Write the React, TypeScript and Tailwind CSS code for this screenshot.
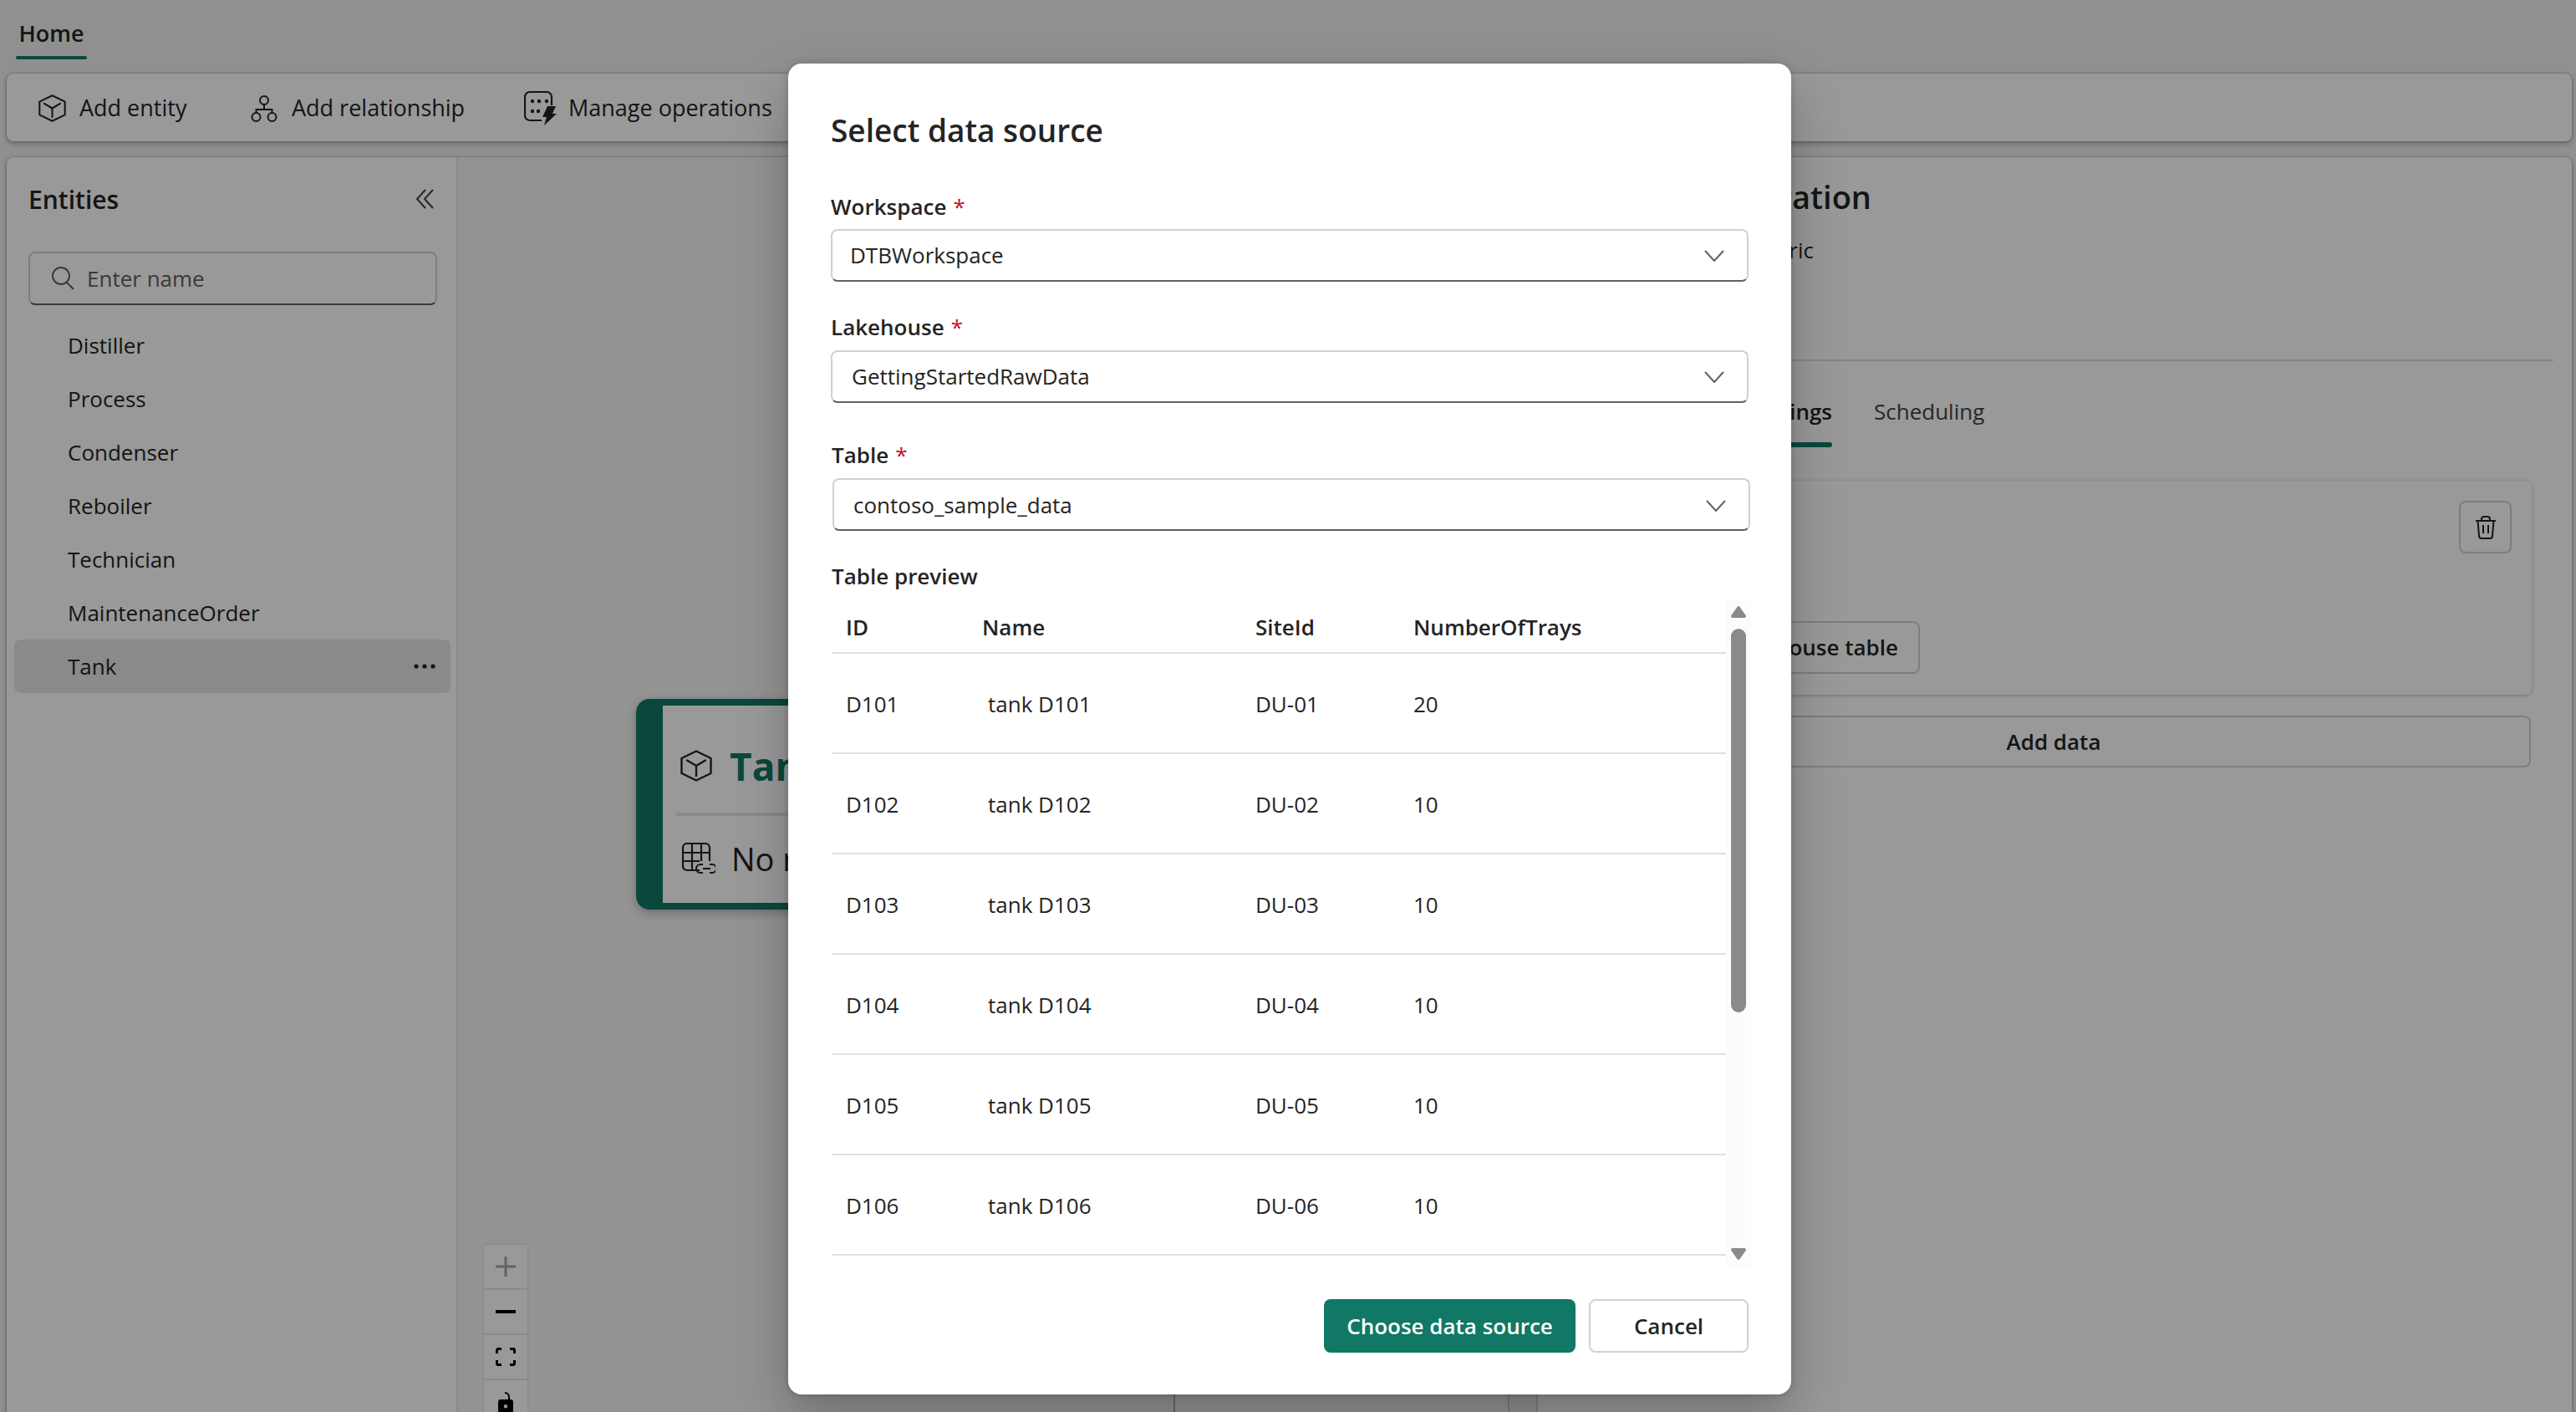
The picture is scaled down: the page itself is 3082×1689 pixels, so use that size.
import React from 'react';

const entities = ['Distiller', 'Process', 'Condenser', 'Reboiler', 'Technician', 'MaintenanceOrder'];

const rows = [
  { id: 'D101', name: 'tank D101', site: 'DU-01', trays: '20' },
  { id: 'D102', name: 'tank D102', site: 'DU-02', trays: '10' },
  { id: 'D103', name: 'tank D103', site: 'DU-03', trays: '10' },
  { id: 'D104', name: 'tank D104', site: 'DU-04', trays: '10' },
  { id: 'D105', name: 'tank D105', site: 'DU-05', trays: '10' },
  { id: 'D106', name: 'tank D106', site: 'DU-06', trays: '10' },
];

const CubeIcon = ({ className }: { className: string }) => (
  <svg viewBox="0 0 38 38" fill="none" stroke="currentColor" strokeWidth="2.4" strokeLinejoin="round" strokeLinecap="round" className={className}>
    <path d="M19 1.5 36.5 10v18L19 36.5 1.5 28V10z" />
    <path d="M8 12.5 19 19l11-6.5M19 19v12" />
  </svg>
);

const RelationshipIcon = () => (
  <svg viewBox="0 0 32 32" fill="none" stroke="currentColor" strokeWidth="2" className="h-[32px] w-[32px] shrink-0">
    <circle cx="16" cy="6" r="5" />
    <circle cx="6.5" cy="26" r="5" />
    <circle cx="25.5" cy="26" r="5" />
    <path d="M16 11v6M6.5 21v-4h19v4" />
  </svg>
);

const OperationsIcon = () => (
  <svg viewBox="0 0 40 42" fill="none" className="h-[42px] w-[40px] shrink-0">
    <path d="M21 35H7a6 6 0 0 1-6-6V7a6 6 0 0 1 6-6h20a6 6 0 0 1 6 6v10" stroke="currentColor" strokeWidth="2.2" />
    <g fill="currentColor">
      <circle cx="10" cy="12" r="2.2" />
      <circle cx="18" cy="12" r="2.2" />
      <circle cx="27" cy="12" r="2.2" />
      <circle cx="10" cy="24" r="2.2" />
      <circle cx="17" cy="24" r="2.2" />
      <path d="M28 18h10l-4 9h5L24 41l3-10h-5z" />
    </g>
  </svg>
);

const Chevron = () => (
  <svg viewBox="0 0 24 14" fill="none" stroke="#616161" strokeWidth="2" className="h-[14px] w-[24px]">
    <path d="M1 1l11 12L23 1" />
  </svg>
);

const Field = ({ label, value, labelClass, boxClass }: { label: string; value: string; labelClass: string; boxClass: string }) => (
  <>
    <div className={`flex h-[40px] items-center text-[26px] font-semibold ${labelClass}`}>
      {label}
      <span className="ml-[8px] font-normal text-[#c50f1f]">*</span>
    </div>
    <div className={`mt-[7px] flex h-[63px] w-[1098px] items-center justify-between rounded-[8px] border-2 border-[#d1d1d1] border-b-[#616161] pr-[27px] text-[26px] text-[#242424] ${boxClass}`}>
      <span>{value}</span>
      <Chevron />
    </div>
  </>
);

export default function App() {
  return (
    <div className="relative h-[1689px] w-[3082px] overflow-hidden bg-[#f0f0f0] font-['Open_Sans',sans-serif] text-[#242424]">
      {/* tabs */}
      <div className="h-[88px] pl-[19px] pt-[19px]">
        <div className="inline-block w-[85px] text-center text-[27px] font-semibold leading-[42px]">Home</div>
        <div className="mt-[6px] h-[4px] w-[85px] rounded-full bg-[#117865]" />
      </div>

      {/* toolbar */}
      <div className="mx-[8px] flex h-[81px] w-[3069px] items-center rounded-[8px] bg-white pl-[38px] pt-[2px] text-[27px] shadow-[0_0_3px_rgba(0,0,0,0.3),0_3px_6px_rgba(0,0,0,0.25)]">
        <CubeIcon className="h-[33px] w-[33px] shrink-0" />
        <span className="ml-[16px] w-[133px] whitespace-nowrap">Add entity</span>
        <span className="ml-[72px]"><RelationshipIcon /></span>
        <span className="ml-[17px] w-[209px] whitespace-nowrap">Add relationship</span>
        <span className="ml-[69px]"><OperationsIcon /></span>
        <span className="ml-[13px] whitespace-nowrap">Manage operations</span>
      </div>

      {/* main area */}
      <div className="mx-[8px] mt-[19px] flex h-[1520px] w-[3069px] rounded-[8px] bg-white shadow-[0_0_3px_rgba(0,0,0,0.3),0_3px_6px_rgba(0,0,0,0.25)]">
        {/* entities */}
        <div className="w-[540px] shrink-0 border-r-2 border-[#e6e6e6]">
          <div className="ml-[26px] mt-[30px] flex h-[40px] w-[485px] items-center justify-between">
            <span className="text-[30px] font-semibold">Entities</span>
            <svg viewBox="0 0 22 24" fill="none" stroke="#424242" strokeWidth="2" className="h-[24px] w-[22px]">
              <path d="M12 1 2 12l10 11M21 1 11 12l10 11" />
            </svg>
          </div>
          <div className="ml-[26px] mt-[43px] flex h-[64px] w-[489px] items-center rounded-[8px] border-2 border-[#d1d1d1] border-b-[#616161] pl-[25px] text-[26px] text-[#616161]">
            <svg viewBox="0 0 28 28" fill="none" stroke="#616161" strokeWidth="2" className="h-[28px] w-[28px] shrink-0">
              <circle cx="12" cy="11" r="10" />
              <path d="M19 19l8 8" />
            </svg>
            <span className="ml-[15px]">Enter name</span>
          </div>
          <div className="ml-[9px] mt-[16px] w-[522px] text-[26px]">
            {entities.map((name) => (
              <div key={name} className="flex h-[64px] items-center pl-[64px]">{name}</div>
            ))}
            <div className="flex h-[64px] items-center justify-between rounded-[8px] bg-[#e6e6e6] pl-[64px] pr-[18px]">
              <span>Tank</span>
              <svg viewBox="0 0 26 6" fill="currentColor" className="h-[6px] w-[26px]">
                <circle cx="3" cy="3" r="2.6" />
                <circle cx="13" cy="3" r="2.6" />
                <circle cx="23" cy="3" r="2.6" />
              </svg>
            </div>
          </div>
        </div>

        {/* canvas */}
        <div className="relative w-[1258px] shrink-0 border-r-2 border-[#d1d1d1] bg-[#f5f5f5]">
          <div className="absolute left-[213px] top-[648px] h-[252px] w-[420px] rounded-[16px] border-y-8 border-l-[32px] border-[#117865] bg-white pl-[16px] shadow-[0_4px_12px_rgba(0,0,0,0.25)]">
            <div className="flex h-[132px] items-center border-b-4 border-[#e6e6e6] pl-[5px] pt-[16px]">
              <CubeIcon className="h-[38px] w-[38px] shrink-0" />
              <span className="ml-[21px] text-[46px] font-bold text-[#117865]">Tank</span>
            </div>
            <div className="flex h-[102px] items-center pl-[7px]">
              <svg viewBox="0 0 40 38" fill="none" stroke="currentColor" strokeWidth="2.2" className="h-[38px] w-[40px] shrink-0">
                <path d="M21 33H6a5 5 0 0 1-5-5V6a5 5 0 0 1 5-5h22a5 5 0 0 1 5 5v16" />
                <path d="M1 12h32M1 22h20M12 1v32M23 1v21" />
                <path d="M25 26h-3a4.5 4.5 0 0 0 0 10h3M33 26h3a4.5 4.5 0 0 1 0 10h-3M25 31h9" />
              </svg>
              <span className="ml-[19px] whitespace-nowrap text-[38px]">No mapping</span>
            </div>
          </div>

          {/* zoom controls */}
          <div className="absolute left-[31px] top-[1301px] flex w-[52px] flex-col gap-[2px] bg-[#e6e6e6] shadow-[0_0_3px_rgba(0,0,0,0.15)]">
            <div className="flex h-[52px] items-center justify-center bg-white">
              <svg viewBox="0 0 24 24" stroke="#a6a6a6" strokeWidth="3" className="h-[24px] w-[24px]"><path d="M12 0v24M0 12h24" /></svg>
            </div>
            <div className="flex h-[52px] items-center justify-center bg-white">
              <svg viewBox="0 0 24 4" stroke="#000" strokeWidth="4" className="h-[4px] w-[24px]"><path d="M0 2h24" /></svg>
            </div>
            <div className="flex h-[52px] items-center justify-center bg-white">
              <svg viewBox="0 0 24 22" fill="none" stroke="#000" strokeWidth="3" className="h-[22px] w-[24px]">
                <path d="M7 1.5H3A1.5 1.5 0 0 0 1.5 3v4M17 1.5h4A1.5 1.5 0 0 1 22.5 3v4M7 20.5H3A1.500 1.5 0 0 1 1.5 19v-4M17 20.5h4a1.5 1.5 0 0 0 1.5-1.5v-4" />
              </svg>
            </div>
            <div className="flex h-[52px] items-start justify-center bg-white pt-[14px]">
              <svg viewBox="0 0 18 26" className="h-[26px] w-[18px]">
                <path d="M8 1a5 5 0 0 1 5 5v4" fill="none" stroke="#000" strokeWidth="2" />
                <path d="M3 9h12a3 3 0 0 1 3 3v10a3 3 0 0 1-3 3H3a3 3 0 0 1-3-3V12a3 3 0 0 1 3-3zm6 6a2.2 2.2 0 1 0 0 4.4A2.2 2.2 0 0 0 9 15z" fillRule="evenodd" />
              </svg>
            </div>
          </div>

          <div className="absolute bottom-0 left-[856px] h-[100px] w-[402px] border-l-2 border-[#b3b3b3]" />
        </div>

        <div className="w-[32px] shrink-0 bg-[#f0f0f0]" />

        {/* configuration pane */}
        <div className="min-w-0 flex-1 border-l-2 border-[#d1d1d1]">
          <div className="mt-[22px] w-[399px] whitespace-nowrap text-right text-[38px] font-semibold leading-[50px]">Tank configuration</div>
          <div className="mt-[17px] w-[330px] whitespace-nowrap text-right text-[26px] leading-[44px]">Microsoft Fabric</div>
          <div className="ml-[24px] mt-[109px] h-[2px] w-[1191px] bg-[#e0e0e0]" />
          <div className="mt-[40px] flex h-[40px] items-center text-[26px]">
            <span className="w-[352px] text-right font-semibold">Bindings</span>
            <span className="ml-[50px] text-[#424242]">Scheduling</span>
          </div>
          <div className="ml-[240px] mt-[17px] h-[6px] w-[112px] rounded-full bg-[#117865]" />
          <div className="ml-[46px] mt-[40px] flex h-[256px] w-[1143px] flex-col rounded-[8px] bg-white shadow-[0_1px_4px_rgba(0,0,0,0.25)]">
            <div className="mr-[24px] mt-[24px] flex h-[63px] w-[63px] items-center justify-center self-end rounded-[8px] border-2 border-[#d1d1d1]">
              <svg viewBox="0 0 26 28" fill="none" stroke="#242424" strokeWidth="2" className="h-[28px] w-[26px]">
                <path d="M1 6h24M8 6V4a3 3 0 0 1 3-3h4a3 3 0 0 1 3 3v2M3.5 6l1.5 18a3 3 0 0 0 3 3h10a3 3 0 0 0 3-3l1.5-18M10 11v10M16 11v10" />
              </svg>
            </div>
            <div className="ml-[24px] mt-[81px] flex h-[63px] w-[387px] items-center justify-end whitespace-nowrap rounded-[8px] border-2 border-[#d1d1d1] pr-[24px] text-[26px] font-semibold">Add lakehouse table</div>
          </div>
          <div className="ml-[46px] mt-[25px] flex h-[62px] w-[1142px] items-center justify-center rounded-[8px] border-2 border-[#d1d1d1] text-[26px] font-semibold">Add data</div>
        </div>
      </div>

      <div className="absolute inset-0 bg-black/40" />

      {/* dialog */}
      <div className="absolute left-[943px] top-[76px] h-[1592px] w-[1200px] rounded-[16px] bg-white pl-[51px] shadow-[0_0_8px_rgba(0,0,0,0.2),0_32px_64px_rgba(0,0,0,0.24)]">
        <h2 className="pt-[53px] text-[37px] font-semibold leading-[54px]">Select data source</h2>
        <div className="mt-[44px]">
          <Field label="Workspace" value="DTBWorkspace" labelClass="" boxClass="pl-[21px]" />
        </div>
        <div className="mt-[35px]">
          <Field label="Lakehouse" value="GettingStartedRawData" labelClass="pb-[2px]" boxClass="pl-[23px]" />
        </div>
        <div className="mt-[43px]">
          <Field label="Table" value="contoso_sample_data" labelClass="ml-[1px] pb-[1px]" boxClass="ml-[2px] pl-[23px] pt-[2px]" />
        </div>
        <div className="ml-[1px] mt-[35px] flex h-[40px] items-center pb-[2px] text-[26px] font-semibold">Table preview</div>

        <div className="ml-[1px] mt-[6px] flex h-[800px]">
          <div className="w-[1070px] pt-[4px] text-[26px]">
            <div className="grid h-[62px] grid-cols-[163px_327px_189px_1fr] items-center border-b-2 border-[#e0e0e0] font-semibold">
              <div className="pl-[17px]">ID</div>
              <div className="pl-[17px]">Name</div>
              <div className="pl-[17px]">SiteId</div>
              <div className="pl-[17px]">NumberOfTrays</div>
            </div>
            {rows.map((row) => (
              <div key={row.id} className="grid h-[120px] grid-cols-[163px_327px_189px_1fr] items-center border-b-2 border-[#e0e0e0] pt-[2px]">
                <div className="pl-[17px]">{row.id}</div>
                <div className="pl-[24px]">{row.name}</div>
                <div className="pl-[17px]">{row.site}</div>
                <div className="pl-[17px]">{row.trays}</div>
              </div>
            ))}
          </div>
          <div className="flex w-[30px] flex-col items-center bg-[#fcfcfc] pb-[9px] pt-[9px]">
            <svg viewBox="0 0 18 14" fill="#8a8a8a" className="h-[14px] w-[18px]"><path d="M9 0a2 2 0 0 1 1.6.9l7 10a2 2 0 0 1-1.6 3.1H2A2 2 0 0 1 .4 10.900l7-10A2 2 0 0 1 9 0z" /></svg>
            <div className="mt-[13px] h-[459px] w-[18px] rounded-full bg-[#8a8a8a]" />
            <svg viewBox="0 0 18 14" fill="#8a8a8a" className="mt-auto h-[14px] w-[18px] rotate-180"><path d="M9 0a2 2 0 0 1 1.6.9l7 10a2 2 0 0 1-1.6 3.1H2A2 2 0 0 1 .4 10.900l7-10A2 2 0 0 1 9 0z" /></svg>
          </div>
        </div>

        <div className="mr-[51px] mt-[38px] flex justify-end gap-[16px] text-[26px] font-semibold">
          <button className="h-[64px] w-[301px] rounded-[8px] bg-[#117865] text-white">Choose data source</button>
          <button className="h-[64px] w-[191px] rounded-[8px] border-2 border-[#d1d1d1] bg-white">Cancel</button>
        </div>
      </div>
    </div>
  );
}
